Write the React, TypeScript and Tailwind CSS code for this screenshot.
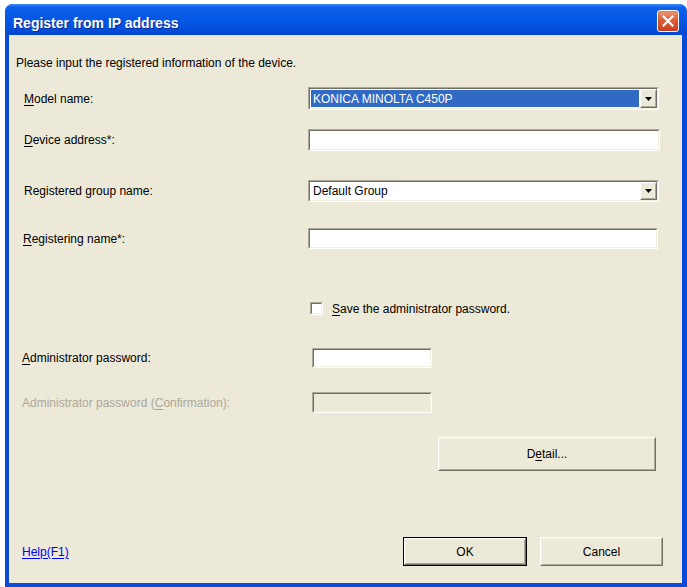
import React from "react";

type Box = { className?: string; children?: React.ReactNode };

// classic 2px sunken edge used by edit boxes, combos and the check box
function Sunken({ className = "", bg = "bg-white", children }: Box & { bg?: string }) {
  return (
    <div className={`${className} border border-t-[#ACA899] border-l-[#ACA899] border-b-white border-r-white`}>
      <div className={`flex h-full w-full border border-t-[#716F64] border-l-[#716F64] border-b-[#F1EFE2] border-r-[#F1EFE2] ${bg}`}>
        {children}
      </div>
    </div>
  );
}

function Raised({ className = "", children }: Box) {
  return (
    <div className={`${className} border border-t-white border-l-white border-b-[#716F64] border-r-[#716F64]`}>
      <div className="flex h-full w-full items-center justify-center border border-t-[#F1EFE2] border-l-[#F1EFE2] border-b-[#ACA899] border-r-[#ACA899] bg-[#ECE9D8]">
        {children}
      </div>
    </div>
  );
}

function ComboArrow() {
  return (
    <Raised className="h-full w-[17px] shrink-0">
      <svg width="7" height="4" viewBox="0 0 7 4">
        <path d="M0 0h7L3.5 4z" fill="#000" />
      </svg>
    </Raised>
  );
}

function Key({ children }: Box) {
  return <span className="underline underline-offset-[2px]">{children}</span>;
}

function Label({ className = "", children }: Box) {
  return <div className={`shrink-0 ${className}`}>{children}</div>;
}

function CloseBox() {
  return (
    <div className="mt-[6px] flex h-[22px] w-[22px] items-center justify-center rounded-[3px] border border-white bg-[linear-gradient(180deg,#EE9A76_0%,#DE5F3A_45%,#C9421F_100%)] shadow-[inset_0_0_2px_rgba(120,20,0,0.5)]">
      <svg width="12" height="12" viewBox="0 0 12 12">
        <path d="M1.5 1.5l9 9M10.5 1.5l-9 9" stroke="#fff" strokeWidth="2.2" strokeLinecap="square" />
      </svg>
    </div>
  );
}

export default function App() {
  return (
    <div className="h-[587px] w-[687px] overflow-hidden bg-white pl-[5px] pt-[4px] font-['Liberation_Sans',Arial,sans-serif] text-[12px] leading-[14px] text-black">
      <div className="flex h-[583px] w-[682px] flex-col overflow-hidden rounded-t-[8px] bg-[#0B4AD9]">
        {/* caption bar */}
        <div className="flex h-[31px] shrink-0 items-start justify-between bg-[linear-gradient(180deg,#3E8EF7_0%,#0D60EA_10%,#0558E6_45%,#0352DF_75%,#0147CF_100%)] pl-[8px] pr-[8px]">
          <span className="mt-[11px] text-[14px] font-bold leading-[16px] text-white [text-shadow:1px_1px_0_#0A2A9C]">
            Register from IP address
          </span>
          <CloseBox />
        </div>

        {/* client area */}
        <div className="mb-[4px] ml-[4px] mr-[5px] flex flex-1 flex-col bg-[#ECE9D8]">
          <div className="mt-[21px] h-[14px] pl-[7px]">Please input the registered information of the device.</div>

          <div className="mt-[17px] flex h-[23px] items-center">
            <Label className="w-[299px] pl-[15px]">
              <Key>M</Key>odel name:
            </Label>
            <Sunken className="h-[23px] w-[351px]">
              <div className="m-[1px] flex flex-1 items-center bg-[#316AC5] pl-[2px] text-white">KONICA MINOLTA C450P</div>
              <ComboArrow />
            </Sunken>
          </div>

          <div className="mt-[19px] flex h-[22px] items-center">
            <Label className="w-[299px] pl-[15px]">
              <Key>D</Key>evice address*:
            </Label>
            <Sunken className="h-[22px] w-[352px]" />
          </div>

          <div className="mt-[29px] flex h-[22px] items-center">
            <Label className="w-[299px] pl-[15px]">Registered group name:</Label>
            <Sunken className="h-[22px] w-[351px]">
              <div className="flex flex-1 items-center pl-[3px]">Default Group</div>
              <ComboArrow />
            </Sunken>
          </div>

          <div className="mt-[26px] flex h-[21px] items-center">
            <Label className="w-[299px] pl-[14px]">
              <Key>R</Key>egistering name*:
            </Label>
            <Sunken className="h-[21px] w-[350px]" />
          </div>

          <div className="mt-[52px] flex h-[15px] items-center pl-[301px]">
            <Sunken className="h-[13px] w-[13px]" />
            <span className="ml-[9px]">
              <Key>S</Key>ave the administrator password.
            </span>
          </div>

          <div className="mt-[32px] flex h-[20px] items-center">
            <Label className="w-[303px] pl-[13px]">
              <Key>A</Key>dministrator password:
            </Label>
            <Sunken className="h-[20px] w-[120px]" />
          </div>

          <div className="mt-[24px] flex h-[21px] items-center">
            <Label className="w-[303px] pl-[13px] text-[#ACA899]">
              Administrator password (<Key>C</Key>onfirmation):
            </Label>
            <Sunken className="h-[21px] w-[120px]" bg="bg-[#ECE9D8]" />
          </div>

          <div className="mt-[24px] flex h-[34px] pl-[429px]">
            <Raised className="h-[34px] w-[218px]">
              D<Key>e</Key>tail...
            </Raised>
          </div>

          <div className="mt-[66px] flex h-[29px] items-center">
            <a className="w-[394px] shrink-0 pl-[13px] text-[#0000FF] underline underline-offset-[2px]">Help(F1)</a>
            <div className="h-[29px] w-[124px] shrink-0 border border-black">
              <Raised className="h-full w-full">OK</Raised>
            </div>
            <Raised className="ml-[13px] h-[29px] w-[123px] shrink-0">Cancel</Raised>
          </div>
        </div>
      </div>
    </div>
  );
}
